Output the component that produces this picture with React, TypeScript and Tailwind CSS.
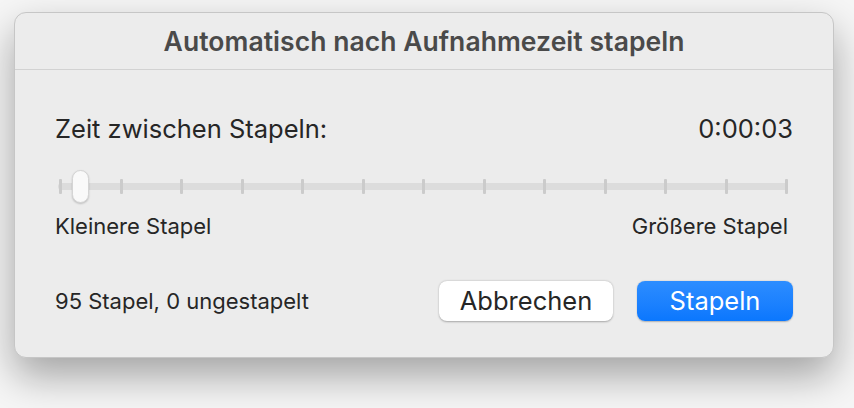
const ticks = Array.from({ length: 13 }, (_, i) => i);

export default function App() {
  return (
    <div
      className="w-[854px] h-[408px] bg-[#f6f6f6] pt-[12px] pl-[14px]"
      style={{ fontFamily: 'Inter, "Noto Sans", sans-serif' }}
    >
      <div className="w-[820px] h-[346px] rounded-[12px] bg-[#ececec] border border-[#c6c6c6] shadow-[0_18px_40px_rgba(0,0,0,0.34)] flex flex-col">
        {/* Title */}
        <div className="h-[57px] flex items-center justify-center border-b border-[#d2d2d2]">
          <span className="text-[26.5px] leading-[30px] font-semibold text-[#4a4a4a] tracking-[0.05px]">
            Automatisch nach Aufnahmezeit stapeln
          </span>
        </div>

        <div className="flex-1 flex flex-col px-[40px] pt-[44px] text-[#262626]">
          {/* Time row */}
          <div className="flex items-center justify-between text-[25.5px] leading-[30px]">
            <span>Zeit zwischen Stapeln:</span>
            <span>0:00:03</span>
          </div>

          {/* Slider */}
          <div className="relative h-[34px] mt-[26px] ml-[3px] mr-[5px]">
            <div className="absolute left-0 right-0 top-[13px] h-[7px] rounded-full bg-[#dcdcdc]" />
            <div className="absolute left-[1px] right-0 top-[9px] flex justify-between">
              {ticks.map((t) => (
                <div key={t} className="w-[3px] h-[15px] rounded-[1px] bg-[#cbcbcb]" />
              ))}
            </div>
            <div className="absolute left-[14px] top-0 w-[17px] h-[33px] rounded-full bg-[#f9f9f9] border border-[#d4d4d4] shadow-[0_1px_2px_rgba(0,0,0,0.2)]" />
          </div>

          <div className="flex items-center justify-between text-[22px] leading-[26px] mt-[9px] mr-[5px]">
            <span>Kleinere Stapel</span>
            <span>Größere Stapel</span>
          </div>

          {/* Bottom */}
          <div className="flex items-center mt-[42px]">
            <span className="text-[22px] flex-1">95 Stapel, 0 ungestapelt</span>
            <button className="w-[174px] h-[40px] rounded-[8px] bg-white text-[25.5px] leading-[30px] text-[#262626] shadow-[0_0.5px_2px_rgba(0,0,0,0.3)]">
              Abbrechen
            </button>
            <button className="ml-[24px] w-[156px] h-[40px] rounded-[8px] bg-gradient-to-b from-[#2c8dff] to-[#0a77fe] text-[25.5px] leading-[30px] text-white shadow-[0_0.5px_1.5px_rgba(0,0,0,0.25)]">
              Stapeln
            </button>
          </div>
        </div>
      </div>
    </div>
  );
}
